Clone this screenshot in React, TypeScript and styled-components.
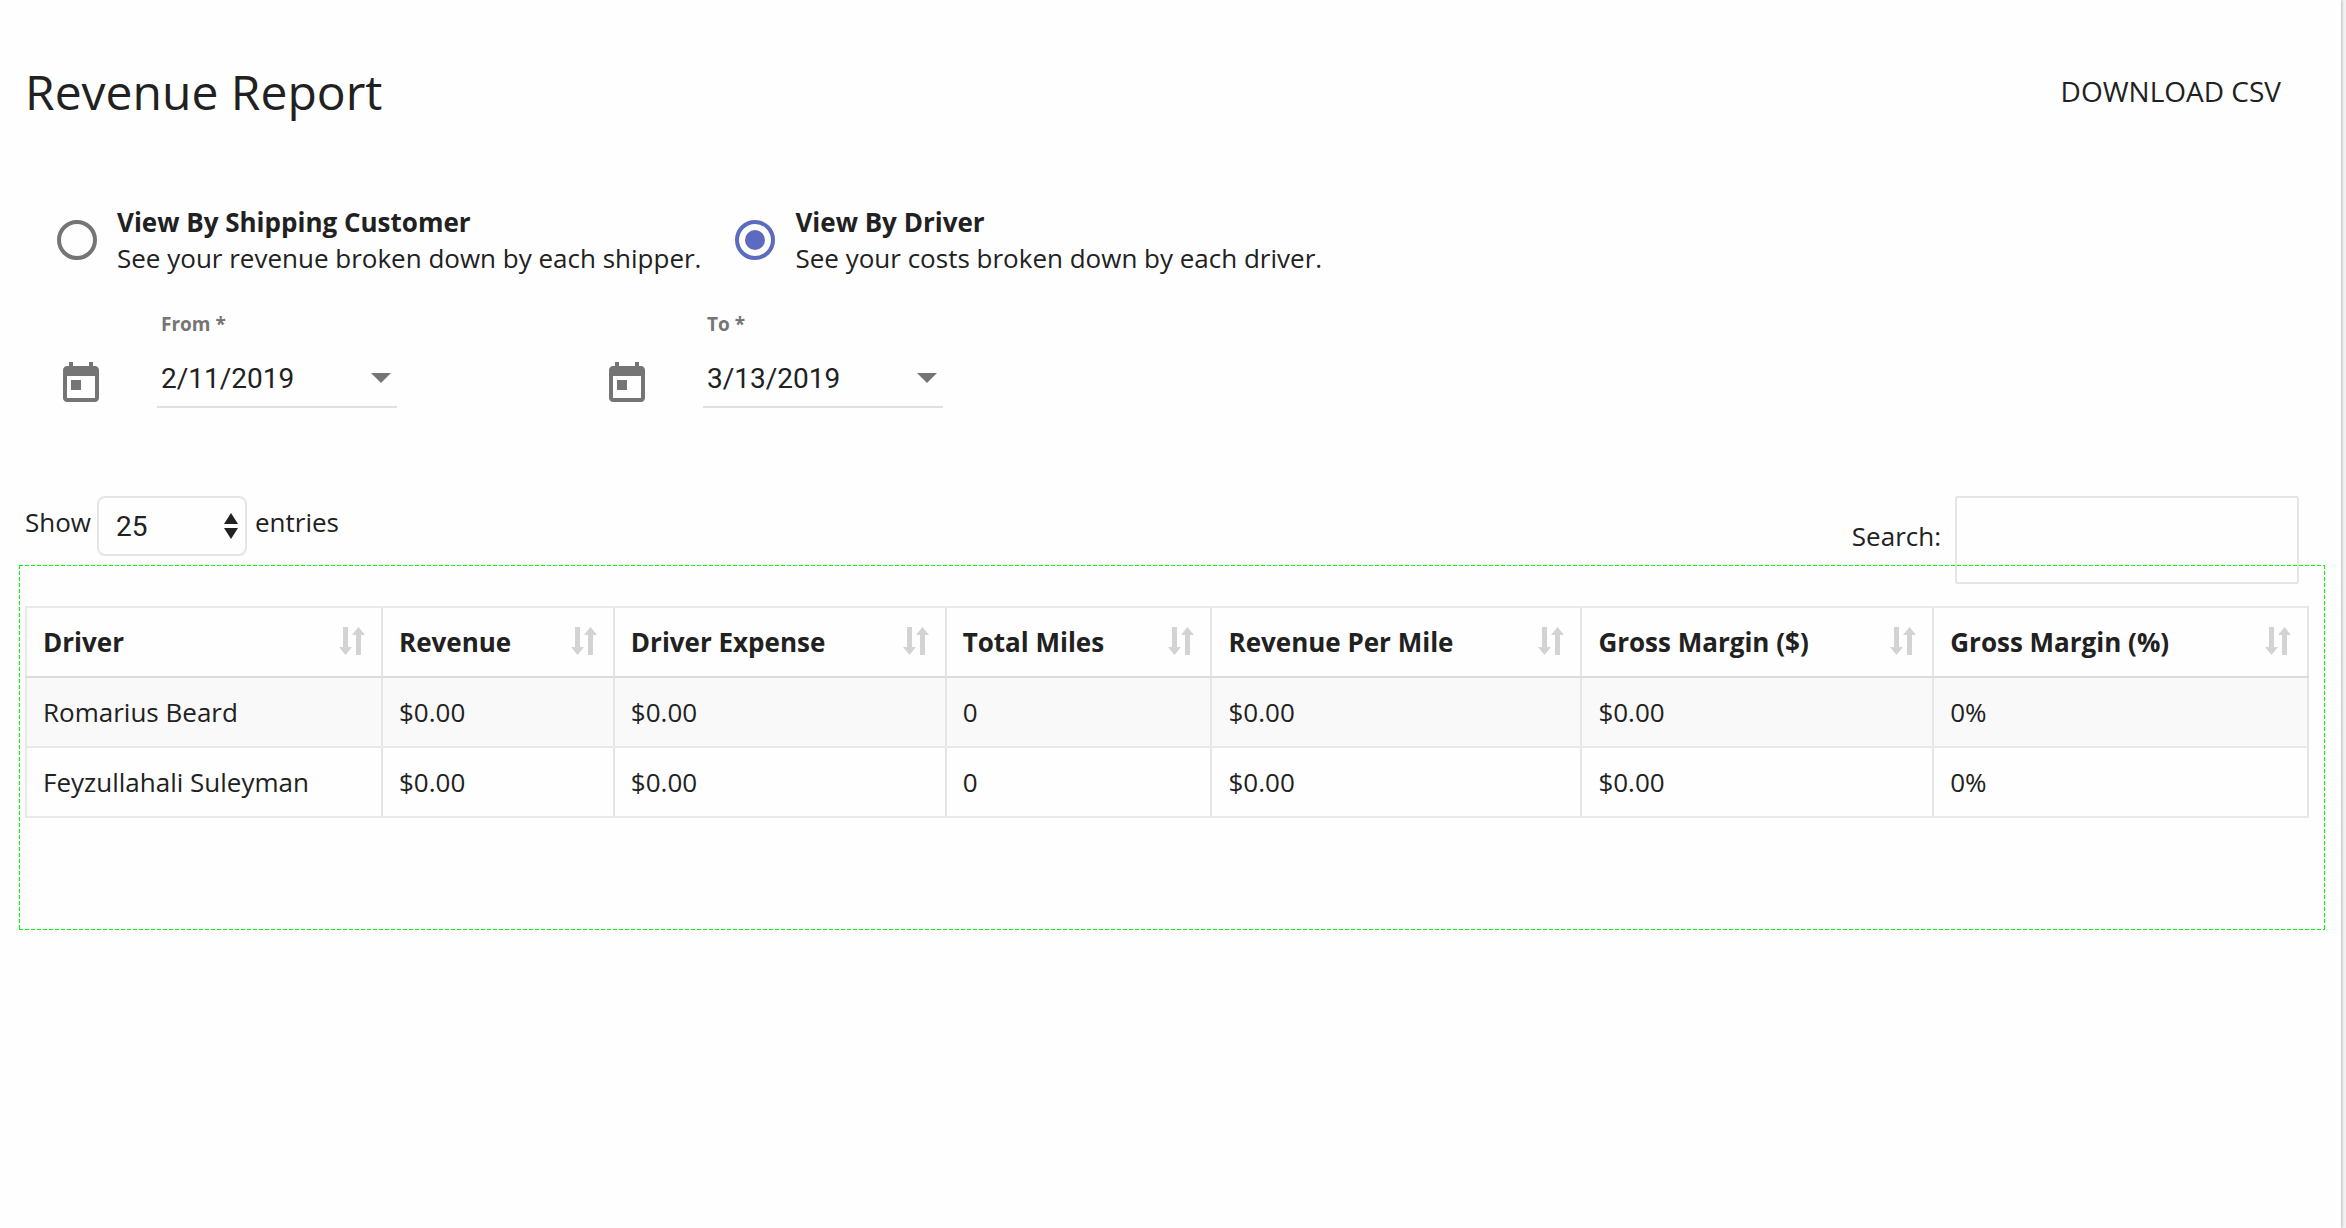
import React, { useState } from "react";
import styled, { createGlobalStyle } from "styled-components";

const GlobalStyle = createGlobalStyle`
  *, *::before, *::after { box-sizing: border-box; }
  body {
    margin: 0;
    background: #f5f5f5;
    color: #212121;
    font-family: "Open Sans", "Noto Sans", sans-serif;
    font-size: 26px;
    line-height: 36px;
  }
  button, input, select { color: inherit; margin: 0; }
`;

const Page = styled.main`
  min-height: 100vh;
  margin-right: 5px;
  padding: 60px 16px 0 19px;
  background: #fefefe;
  box-shadow: 0 0 4px rgba(0, 0, 0, 0.4);
`;

const Header = styled.header`
  display: flex;
  align-items: center;
  justify-content: space-between;
  padding: 0 28px 0 6px;
`;

const Title = styled.h1`
  margin: 0;
  font-size: 48px;
  line-height: 64px;
  font-weight: 400;
`;

const DownloadButton = styled.button`
  padding: 0 16px 2px;
  border: 0;
  background: none;
  font-family: inherit;
  font-size: 28px;
  line-height: 40px;
  font-kerning: none;
  text-transform: uppercase;
  cursor: pointer;
`;

const ViewOptions = styled.fieldset`
  display: flex;
  gap: 34px;
  margin: 80px 0 0;
  padding: 0 0 0 38px;
  border: 0;
`;

const Option = styled.label`
  display: flex;
  align-items: center;
  gap: 20px;
  cursor: pointer;
`;

const Radio = styled.input`
  appearance: none;
  display: grid;
  place-items: center;
  flex: none;
  width: 40px;
  height: 40px;
  border: 4px solid #757575;
  border-radius: 50%;
  &:checked { border-color: #5c6bc0; }
  &:checked::before {
    content: "";
    width: 20px;
    height: 20px;
    border-radius: 50%;
    background: #5c6bc0;
  }
`;

const OptionText = styled.span`
  display: grid;
`;

const DateRange = styled.div`
  display: flex;
  gap: 206px;
  margin-top: 36px;
  padding-left: 38px;
`;

const DateField = styled.div`
  display: flex;
  align-items: flex-end;
  gap: 52px;
`;

const CalendarIcon = styled.svg`
  width: 48px;
  height: 48px;
  fill: #757575;
`;

const DateColumn = styled.div`
  display: grid;
  grid-template-columns: minmax(0, 1fr);
  gap: 16px;
  width: 240px;
`;

const DateLabel = styled.label`
  padding-left: 4px;
  color: #757575;
  font-size: 19px;
  line-height: 24px;
  font-weight: 700;
`;

const DateBox = styled.div`
  display: flex;
  align-items: center;
  height: 56px;
  padding: 0 6px 2px 4px;
  border-bottom: 2px solid #e0e0e0;
`;

const DateInput = styled.input`
  flex: 1;
  min-width: 0;
  padding: 0;
  border: 0;
  background: none;
  font-family: Roboto, sans-serif;
  font-size: 28px;
`;

const CaretButton = styled.button`
  display: flex;
  padding: 0;
  border: 0;
  background: none;
  color: #757575;
`;

const Controls = styled.div`
  display: flex;
  align-items: flex-start;
  justify-content: space-between;
  margin-top: 88px;
  padding: 0 26px 0 6px;
`;

const ControlGroup = styled.div`
  display: flex;
  align-items: center;
`;

const ControlLabel = styled.label`
  padding-bottom: 8px;
`;

const SelectBox = styled.div`
  position: relative;
  margin: 0 8px 0 6px;
`;

const LengthSelect = styled.select`
  appearance: none;
  display: block;
  width: 150px;
  height: 60px;
  padding: 0 36px 0 17px;
  border: 2px solid #e5e5e5;
  border-radius: 8px;
  background: transparent;
  font-family: Roboto, sans-serif;
  font-size: 28px;
`;

const SelectArrows = styled.svg`
  position: absolute;
  top: 17px;
  right: 9px;
  pointer-events: none;
`;

const SearchInput = styled.input`
  width: 344px;
  height: 88px;
  margin-left: 14px;
  padding: 0 16px;
  border: 2px solid #e5e5e5;
  border-radius: 2px;
  background: transparent;
  font-family: inherit;
  font-size: 26px;
`;

const dash = (direction: string) =>
  `repeating-linear-gradient(${direction}, #00ff00 0 4px, transparent 4px 6px)`;

const TableFrame = styled.section`
  position: relative;
  margin-top: -19px;
  padding: 41px 16px 112px 6px;
  pointer-events: none;
  background:
    ${dash("to right")} top / 100% 1px no-repeat,
    ${dash("to right")} bottom / 100% 1px no-repeat,
    ${dash("to bottom")} left / 1px 100% no-repeat,
    ${dash("to bottom")} right / 1px 100% no-repeat;
  & > * { pointer-events: auto; }
`;

const Table = styled.table`
  width: 100%;
  table-layout: fixed;
  border-collapse: collapse;
  border: 2px solid #e9e9e9;
`;

const Col = styled.col<{ $share: number }>`
  width: ${(p) => p.$share}%;
`;

const HeadCell = styled.th`
  height: 70px;
  padding: 0 16px;
  border-right: 2px solid #e5e5e5;
  border-bottom: 2px solid #dcdcdc;
  text-align: left;
  font-weight: 700;
`;

const HeadContent = styled.div`
  display: flex;
  align-items: center;
  justify-content: space-between;
  white-space: nowrap;
`;

const SortButton = styled.button`
  display: flex;
  padding: 0 0 2px;
  border: 0;
  background: none;
  color: #d3d3d3;
`;

const Row = styled.tr`
  &:nth-child(odd) { background: #f9f9f9; }
`;

const Cell = styled.td`
  height: 70px;
  padding: 0 16px;
  border-right: 2px solid #e5e5e5;
  border-bottom: 2px solid #e7e9eb;
`;

const columns = [
  { title: "Driver", share: 15.6 },
  { title: "Revenue", share: 10.16 },
  { title: "Driver Expense", share: 14.54 },
  { title: "Total Miles", share: 11.65 },
  { title: "Revenue Per Mile", share: 16.21 },
  { title: "Gross Margin ($)", share: 15.42 },
  { title: "Gross Margin (%)", share: 16.42 },
];

const rows = [
  ["Romarius Beard", "$0.00", "$0.00", "0", "$0.00", "$0.00", "0%"],
  ["Feyzullahali Suleyman", "$0.00", "$0.00", "0", "$0.00", "$0.00", "0%"],
];

const views = [
  { id: "customer", title: "View By Shipping Customer", text: "See your revenue broken down by each shipper." },
  { id: "driver", title: "View By Driver", text: "See your costs broken down by each driver." },
];

function DatePicker({ id, label, initial }: { id: string; label: string; initial: string }) {
  const [value, setValue] = useState(initial);
  return (
    <DateField>
      <CalendarIcon viewBox="0 0 24 24" aria-hidden="true">
        <path d="M19 3h-1V1h-2v2H8V1H6v2H5c-1.11 0-1.99.9-1.99 2L3 19c0 1.1.89 2 2 2h14c1.1 0 2-.9 2-2V5c0-1.1-.9-2-2-2zm0 16H5V8h14v11zM7 10h5v5H7z" />
      </CalendarIcon>
      <DateColumn>
        <DateLabel htmlFor={id}>{label} *</DateLabel>
        <DateBox>
          <DateInput id={id} required value={value} onChange={(e) => setValue(e.target.value)} />
          <CaretButton type="button" aria-label={`Open ${label} calendar`}>
            <svg width="20" height="10" viewBox="0 0 20 10" fill="currentColor">
              <path d="M0 0h20L10 10z" />
            </svg>
          </CaretButton>
        </DateBox>
      </DateColumn>
    </DateField>
  );
}

export default function App() {
  const [view, setView] = useState("driver");
  return (
    <>
      <GlobalStyle />
      <Page>
        <Header>
          <Title>Revenue Report</Title>
          <DownloadButton type="button">Download CSV</DownloadButton>
        </Header>

        <ViewOptions aria-label="View by">
          {views.map((v) => (
            <Option key={v.id}>
              <Radio type="radio" name="view" checked={view === v.id} onChange={() => setView(v.id)} />
              <OptionText>
                <strong>{v.title}</strong>
                <span>{v.text}</span>
              </OptionText>
            </Option>
          ))}
        </ViewOptions>

        <DateRange>
          <DatePicker id="from" label="From" initial="2/11/2019" />
          <DatePicker id="to" label="To" initial="3/13/2019" />
        </DateRange>

        <Controls>
          <ControlGroup>
            <ControlLabel htmlFor="length">Show</ControlLabel>
            <SelectBox>
              <LengthSelect id="length" defaultValue="25">
                <option>10</option>
                <option>25</option>
                <option>50</option>
                <option>100</option>
              </LengthSelect>
              <SelectArrows width="14" height="26" viewBox="0 0 14 26" fill="#212121" aria-hidden="true">
                <path d="M7 0l7 11H0zM7 26L0 15h14z" />
              </SelectArrows>
            </SelectBox>
            <ControlLabel htmlFor="length">entries</ControlLabel>
          </ControlGroup>
          <ControlGroup>
            <ControlLabel htmlFor="search">Search:</ControlLabel>
            <SearchInput id="search" type="search" />
          </ControlGroup>
        </Controls>

        <TableFrame>
          <Table>
            <colgroup>
              {columns.map((c) => (
                <Col key={c.title} $share={c.share} />
              ))}
            </colgroup>
            <thead>
              <tr>
                {columns.map((c) => (
                  <HeadCell key={c.title} scope="col">
                    <HeadContent>
                      {c.title}
                      <SortButton type="button" aria-label={`Sort by ${c.title}`}>
                        <svg width="26" height="28" viewBox="0 0 26 28" fill="currentColor">
                          <path d="M4 0h5v20h4l-6.500 8L0 20h4zM17 28V8h-4l6.500-8L26 8h-4v20z" />
                        </svg>
                      </SortButton>
                    </HeadContent>
                  </HeadCell>
                ))}
              </tr>
            </thead>
            <tbody>
              {rows.map((r) => (
                <Row key={r[0]}>
                  {r.map((text, i) => (
                    <Cell key={i}>{text}</Cell>
                  ))}
                </Row>
              ))}
            </tbody>
          </Table>
        </TableFrame>
      </Page>
    </>
  );
}
